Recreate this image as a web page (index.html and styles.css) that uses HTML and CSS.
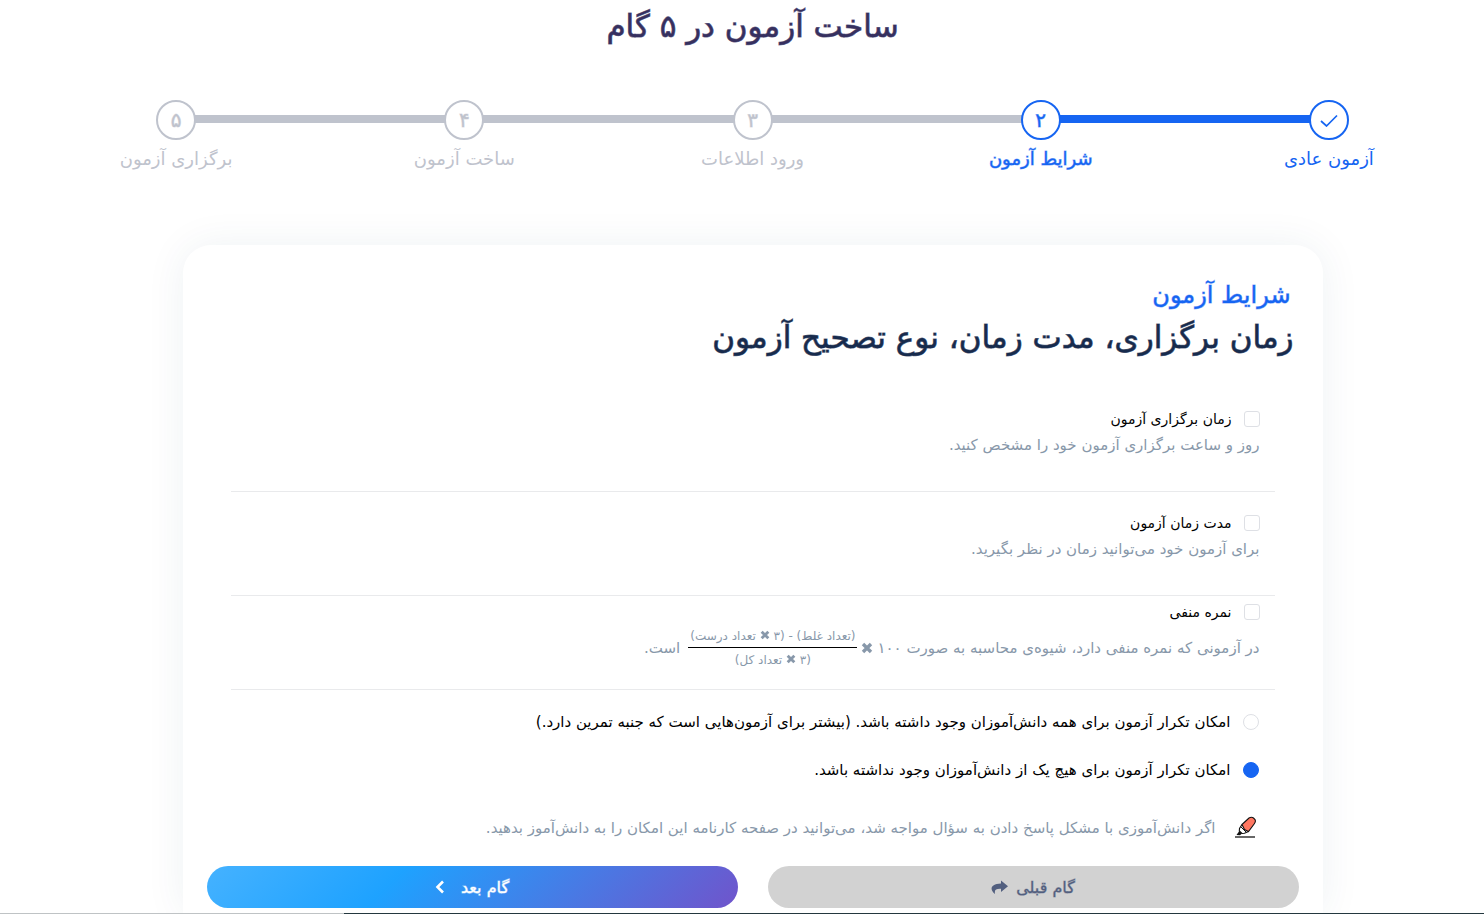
FILE: index.html
```html
<!DOCTYPE html>
<html lang="fa" dir="rtl">
<head>
<meta charset="utf-8">
<title>ساخت آزمون</title>
<link rel="stylesheet" href="styles.css">
</head>
<body>
<svg class="sprite" aria-hidden="true">
  <symbol id="times" viewBox="0 0 12 12"><path d="M2 2L10 10M10 2L2 10" stroke="currentColor" stroke-width="3.4"/></symbol>
</svg>
<main class="page">
  <h1 class="page-title">ساخت آزمون در ۵ گام</h1>
  <ol class="steps">
    <li class="step done"><span class="circle"><svg width="18" height="14" viewBox="0 0 18 14"><path d="M1 8L6.500 13L17 2.500" fill="none" stroke="currentColor" stroke-width="1.700"/></svg></span><span class="step-label">آزمون عادی</span></li>
    <li class="step current"><span class="circle">۲</span><span class="step-label">شرایط آزمون</span></li>
    <li class="step"><span class="circle">۳</span><span class="step-label">ورود اطلاعات</span></li>
    <li class="step"><span class="circle">۴</span><span class="step-label">ساخت آزمون</span></li>
    <li class="step"><span class="circle">۵</span><span class="step-label">برگزاری آزمون</span></li>
  </ol>
  <form class="card">
    <header class="card-head">
      <p class="eyebrow">شرایط آزمون</p>
      <h2 class="card-title">زمان برگزاری، مدت زمان، نوع تصحیح آزمون</h2>
    </header>
    <section class="option">
      <label class="choice"><input type="checkbox" class="box">زمان برگزاری آزمون</label>
      <p class="hint">روز و ساعت برگزاری آزمون خود را مشخص کنید.</p>
    </section>
    <section class="option">
      <label class="choice"><input type="checkbox" class="box">مدت زمان آزمون</label>
      <p class="hint">برای آزمون خود می‌توانید زمان در نظر بگیرید.</p>
    </section>
    <section class="option negative">
      <label class="choice"><input type="checkbox" class="box">نمره منفی</label>
      <p class="hint formula"><span>در آزمونی که نمره منفی دارد، شیوه‌ی محاسبه به صورت ۱۰۰</span><svg class="times"><use href="#times"/></svg><span class="fraction"><span class="numerator">(تعداد غلط) - (۳ <svg class="times small"><use href="#times"/></svg> تعداد درست)</span><span class="denominator">(۳ <svg class="times small"><use href="#times"/></svg> تعداد کل)</span></span><span>است.</span></p>
    </section>
    <section class="repeat">
      <label class="choice"><input type="radio" name="repeat" class="box radio">امکان تکرار آزمون برای همه دانش‌آموزان وجود داشته باشد. (بیشتر برای آزمون‌هایی است که جنبه تمرین دارد.)</label>
      <label class="choice"><input type="radio" name="repeat" class="box radio" checked>امکان تکرار آزمون برای هیچ یک از دانش‌آموزان وجود نداشته باشد.</label>
    </section>
    <p class="hint note"><svg width="24" height="24" viewBox="0 0 24 24"><path d="M1 21H21" stroke="#000" stroke-width="1.200"/><path d="M8 8.500L15 2Q17.500 0.500 19.500 2L21 3.500Q22 5.500 20.500 7.500L14.500 15.500L10.500 13.500Z" fill="#ff7761" stroke="#111" stroke-width="1.100"/><path d="M8 8.500L5.500 12.500L5.300 15L8 17.500L10.500 17.300L14.500 15.500" fill="none" stroke="#111" stroke-width="1.100"/><path d="M5.300 15L2.500 19L6 19.300L8 17.500Z" fill="#111"/><path d="M7 11L12 16" stroke="#111" stroke-width="1"/></svg><span>اگر دانش‌آموزی با مشکل پاسخ دادن به سؤال مواجه شد، می‌توانید در صفحه کارنامه این امکان را به دانش‌آموز بدهید.</span></p>
    <div class="actions">
      <button type="button" class="btn previous"><span>گام قبلی</span><svg width="17" height="14" viewBox="0 0 17 14"><path d="M10 0.500L17 6.300L10 12V8.800C5 8.600 3.200 9.800 4 14C-1.500 10 -1 3.600 10 3.400Z" fill="currentColor"/></svg></button>
      <button type="button" class="btn next"><span>گام بعد</span><svg width="10" height="14" viewBox="0 0 10 14"><path d="M8 1.500L2.500 7L8 12.500" fill="none" stroke="currentColor" stroke-width="2.600"/></svg></button>
    </div>
  </form>
</main>
<div class="bottom-edge"></div>
</body>
</html>
```
FILE: styles.css
```css
* { box-sizing: border-box; }
body {
  margin: 0;
  background: #fff;
  color: #000;
  font-family: "DejaVu Sans", sans-serif;
  font-size: 15px;
}
h1, h2, p, ol { margin: 0; padding: 0; }
.sprite { position: absolute; width: 0; height: 0; }
.page {
  min-height: 100vh;
  display: flex;
  flex-direction: column;
  padding: 6px 11px 0 32px;
  overflow: hidden;
}
.page-title {
  text-align: center;
  font-size: 31px;
  line-height: 40px;
  font-weight: 400;
  color: #36305f;
  -webkit-text-stroke: 1px rgba(54, 48, 95, 0.7);
}
.steps {
  list-style: none;
  display: grid;
  grid-template-columns: repeat(5, 1fr);
  margin-top: 54px;
}
.step {
  position: relative;
  display: flex;
  flex-direction: column;
  align-items: center;
  gap: 4px;
  color: #bfc3cd;
}
.step.done, .step.current { color: #1665f2; }
.step:not(:last-child)::after {
  content: "";
  position: absolute;
  top: 15px;
  right: 50%;
  width: 100%;
  height: 8px;
  background: #bfc3cd;
}
.step.done::after { background: #1665f2; }
.circle {
  position: relative;
  z-index: 1;
  width: 40px;
  height: 40px;
  display: flex;
  align-items: center;
  justify-content: center;
  border: 2px solid currentColor;
  border-radius: 50%;
  background: #fff;
  font-size: 20px;
  line-height: 36px;
  -webkit-text-stroke: 1px rgba(191, 195, 205, 0.5);
}
.current .circle, .current .step-label { -webkit-text-stroke: 1px rgba(22, 101, 242, 0.5); }
.circle svg { display: block; }
.step-label { font-size: 18px; line-height: 30px; }
.card {
  flex: 1;
  width: 100%;
  max-width: 1140px;
  margin: 71px auto 0;
  padding: 32px 24px 6px;
  border-radius: 28px 28px 0 0;
  background: #fff;
  box-shadow: 0 0 40px rgba(30, 65, 100, 0.07);
}
.card-head { padding: 0 5px 0 0; }
.eyebrow {
  padding-right: 3px;
  color: #1665f2;
  font-size: 24px;
  line-height: 36px;
  -webkit-text-stroke: 1px rgba(22, 101, 242, 0.5);
}
.card-title {
  color: #172b4d;
  font-size: 31px;
  line-height: 48px;
  font-weight: 400;
  -webkit-text-stroke: 1px rgba(23, 43, 77, 0.7);
}
.option {
  margin: 0 24px;
  padding: 18px 15px 33px;
  border-bottom: 1px solid #e9eaec;
}
.option .choice { font-size: 14px; }
.card-head + .option { padding-top: 45px; }
.option.negative { padding: 3px 15px 18px; }
.choice {
  display: flex;
  align-items: center;
  gap: 12px;
  line-height: 26px;
}
.box {
  appearance: none;
  flex: none;
  width: 16px;
  height: 16px;
  margin: 0;
  border: 1px solid #dee0e5;
  border-radius: 3px;
  background: #fff;
}
.radio { border-radius: 50%; }
.radio:checked { background: #1665f2; border-color: #1665f2; }
.hint { color: #8898aa; line-height: 26px; }
.formula { display: flex; align-items: center; }
.times { width: 12px; height: 12px; margin: 0 4px; }
.times.small { width: 10px; height: 10px; margin: 0; }
.fraction {
  display: flex;
  flex-direction: column;
  margin-left: 8px;
  font-size: 12px;
  line-height: 22px;
  text-align: center;
}
.numerator { border-bottom: 1px solid #000; padding: 0 2px; }
.denominator { padding-top: 1px; }
.repeat {
  display: flex;
  flex-direction: column;
  gap: 22px;
  padding: 19px 40px 0;
}
.note {
  display: flex;
  align-items: center;
  gap: 18px;
  padding: 32px 41px 0;
}
.actions {
  display: grid;
  grid-template-columns: 1fr 1fr;
  gap: 30px;
  margin-top: 25px;
}
.btn {
  display: flex;
  align-items: center;
  justify-content: center;
  gap: 8px;
  height: 42px;
  border: 0;
  border-radius: 21px;
  font-family: inherit;
  font-size: 16px;
}
.previous {
  background: #d2d2d2;
  color: #525f7f;
  -webkit-text-stroke: 1px rgba(82, 95, 127, 0.4);
}
.next {
  gap: 16px;
  color: #fff;
  background: linear-gradient(135deg, #45b2ff 0%, #1ea2ff 35%, #7054cb 100%);
  -webkit-text-stroke: 1px rgba(255, 255, 255, 0.5);
}
.bottom-edge {
  position: fixed;
  left: 0;
  right: 0;
  bottom: 0;
  height: 1px;
  background: linear-gradient(90deg, #bfc3c5 344px, #24383f 344px);
}
```
